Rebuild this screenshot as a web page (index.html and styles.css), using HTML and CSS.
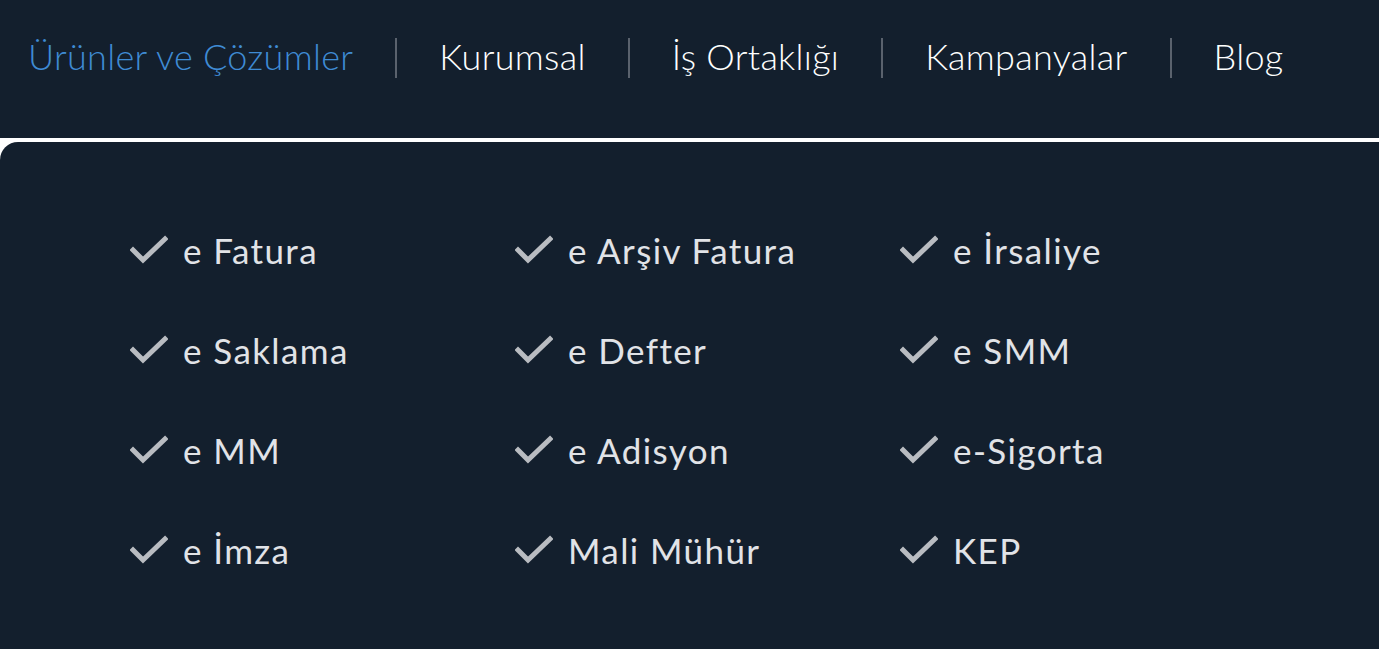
FILE: index.html
```html
<!DOCTYPE html>
<html lang="tr">
<head>
<meta charset="utf-8">
<title>Menü</title>
<link rel="stylesheet" href="styles.css">
</head>
<body>
<header class="header">
  <nav class="nav">
    <a class="nav-link active" href="#">Ürünler ve Çözümler</a>
    <span class="sep"></span>
    <a class="nav-link" href="#">Kurumsal</a>
    <span class="sep"></span>
    <a class="nav-link" href="#">İş Ortaklığı</a>
    <span class="sep"></span>
    <a class="nav-link" href="#">Kampanyalar</a>
    <span class="sep"></span>
    <a class="nav-link" href="#">Blog</a>
  </nav>
</header>
<section class="panel">
  <ul class="grid">
    <li class="item"><svg class="check" viewBox="0 0 38 30"><path d="M3 15 L13 25 L35 4"/></svg>e Fatura</li>
    <li class="item"><svg class="check" viewBox="0 0 38 30"><path d="M3 15 L13 25 L35 4"/></svg>e Arşiv Fatura</li>
    <li class="item"><svg class="check" viewBox="0 0 38 30"><path d="M3 15 L13 25 L35 4"/></svg>e İrsaliye</li>
    <li class="item"><svg class="check" viewBox="0 0 38 30"><path d="M3 15 L13 25 L35 4"/></svg>e Saklama</li>
    <li class="item"><svg class="check" viewBox="0 0 38 30"><path d="M3 15 L13 25 L35 4"/></svg>e Defter</li>
    <li class="item"><svg class="check" viewBox="0 0 38 30"><path d="M3 15 L13 25 L35 4"/></svg>e SMM</li>
    <li class="item"><svg class="check" viewBox="0 0 38 30"><path d="M3 15 L13 25 L35 4"/></svg>e MM</li>
    <li class="item"><svg class="check" viewBox="0 0 38 30"><path d="M3 15 L13 25 L35 4"/></svg>e Adisyon</li>
    <li class="item"><svg class="check" viewBox="0 0 38 30"><path d="M3 15 L13 25 L35 4"/></svg>e-Sigorta</li>
    <li class="item"><svg class="check" viewBox="0 0 38 30"><path d="M3 15 L13 25 L35 4"/></svg>e İmza</li>
    <li class="item"><svg class="check" viewBox="0 0 38 30"><path d="M3 15 L13 25 L35 4"/></svg>Mali Mühür</li>
    <li class="item"><svg class="check" viewBox="0 0 38 30"><path d="M3 15 L13 25 L35 4"/></svg>KEP</li>
  </ul>
</section>
</body>
</html>
```
FILE: styles.css
```css
* { box-sizing: border-box; }
html, body { margin: 0; padding: 0; }
body {
  background: #ffffff;
  font-family: Lato, "Noto Sans", sans-serif;
  overflow: hidden;
}
.header {
  background: #131f2d;
  height: 138px;
  padding: 38px 0 0 28px;
}
.nav {
  display: flex;
  align-items: center;
  height: 40px;
}
.nav-link {
  color: #ffffff;
  text-decoration: none;
  font-size: 36px;
  font-weight: 300;
  letter-spacing: 0.3px;
  line-height: 36px;
  margin-top: -4px;
  white-space: nowrap;
}
.nav-link.active { color: #3f8bd4; }
.sep {
  width: 2px;
  height: 40px;
  background: #5a626d;
  margin: 0 42px;
}
.panel {
  margin-top: 4px;
  background: #131f2d;
  border-top-left-radius: 18px;
  height: 507px;
  padding: 88px 0 0 130px;
}
.grid {
  list-style: none;
  margin: 0;
  padding: 0;
  display: grid;
  grid-template-columns: repeat(3, 385px);
  grid-auto-rows: 100px;
}
.item {
  display: flex;
  align-items: center;
  height: 40px;
  gap: 15px;
  color: #e1e3e7;
  font-size: 35px;
  letter-spacing: 1.4px;
  white-space: nowrap;
}
.check {
  width: 38px;
  height: 30px;
  flex: none;
}
.check path {
  fill: none;
  stroke: #b9bcc1;
  stroke-width: 5;
  stroke-linecap: square;
  stroke-linejoin: miter;
}
```
